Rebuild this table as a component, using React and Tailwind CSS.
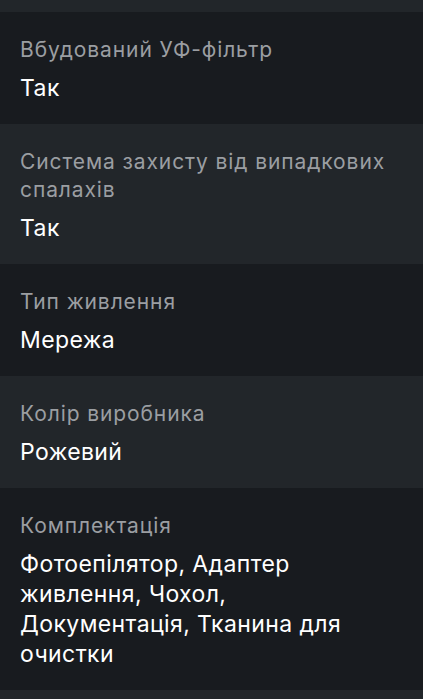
const rows = [
  { label: 'Вбудований УФ-фільтр', value: 'Так' },
  { label: 'Система захисту від випадкових спалахів', value: 'Так' },
  { label: 'Тип живлення', value: 'Мережа' },
  { label: 'Колір виробника', value: 'Рожевий' },
  { label: 'Комплектація', value: 'Фотоепілятор, Адаптер живлення, Чохол, Документація, Тканина для очистки' },
];

export default function App() {
  return (
    <div className="min-h-[699px] bg-[#22262a] pt-3 font-['Inter',sans-serif]">
      {rows.map((row, i) => (
        <div
          key={i}
          className={`px-5 pt-6 pb-[21px] ${i % 2 === 0 ? 'bg-[#181b1f]' : 'bg-[#22262a]'}`}
        >
          <div className="text-[21px] leading-[28px] tracking-[0.9px] text-[#9b9ea2]">{row.label}</div>
          <div className="mt-[9px] pr-3 text-[23px] leading-[30px] tracking-[0.4px] text-white">{row.value}</div>
        </div>
      ))}
    </div>
  );
}
